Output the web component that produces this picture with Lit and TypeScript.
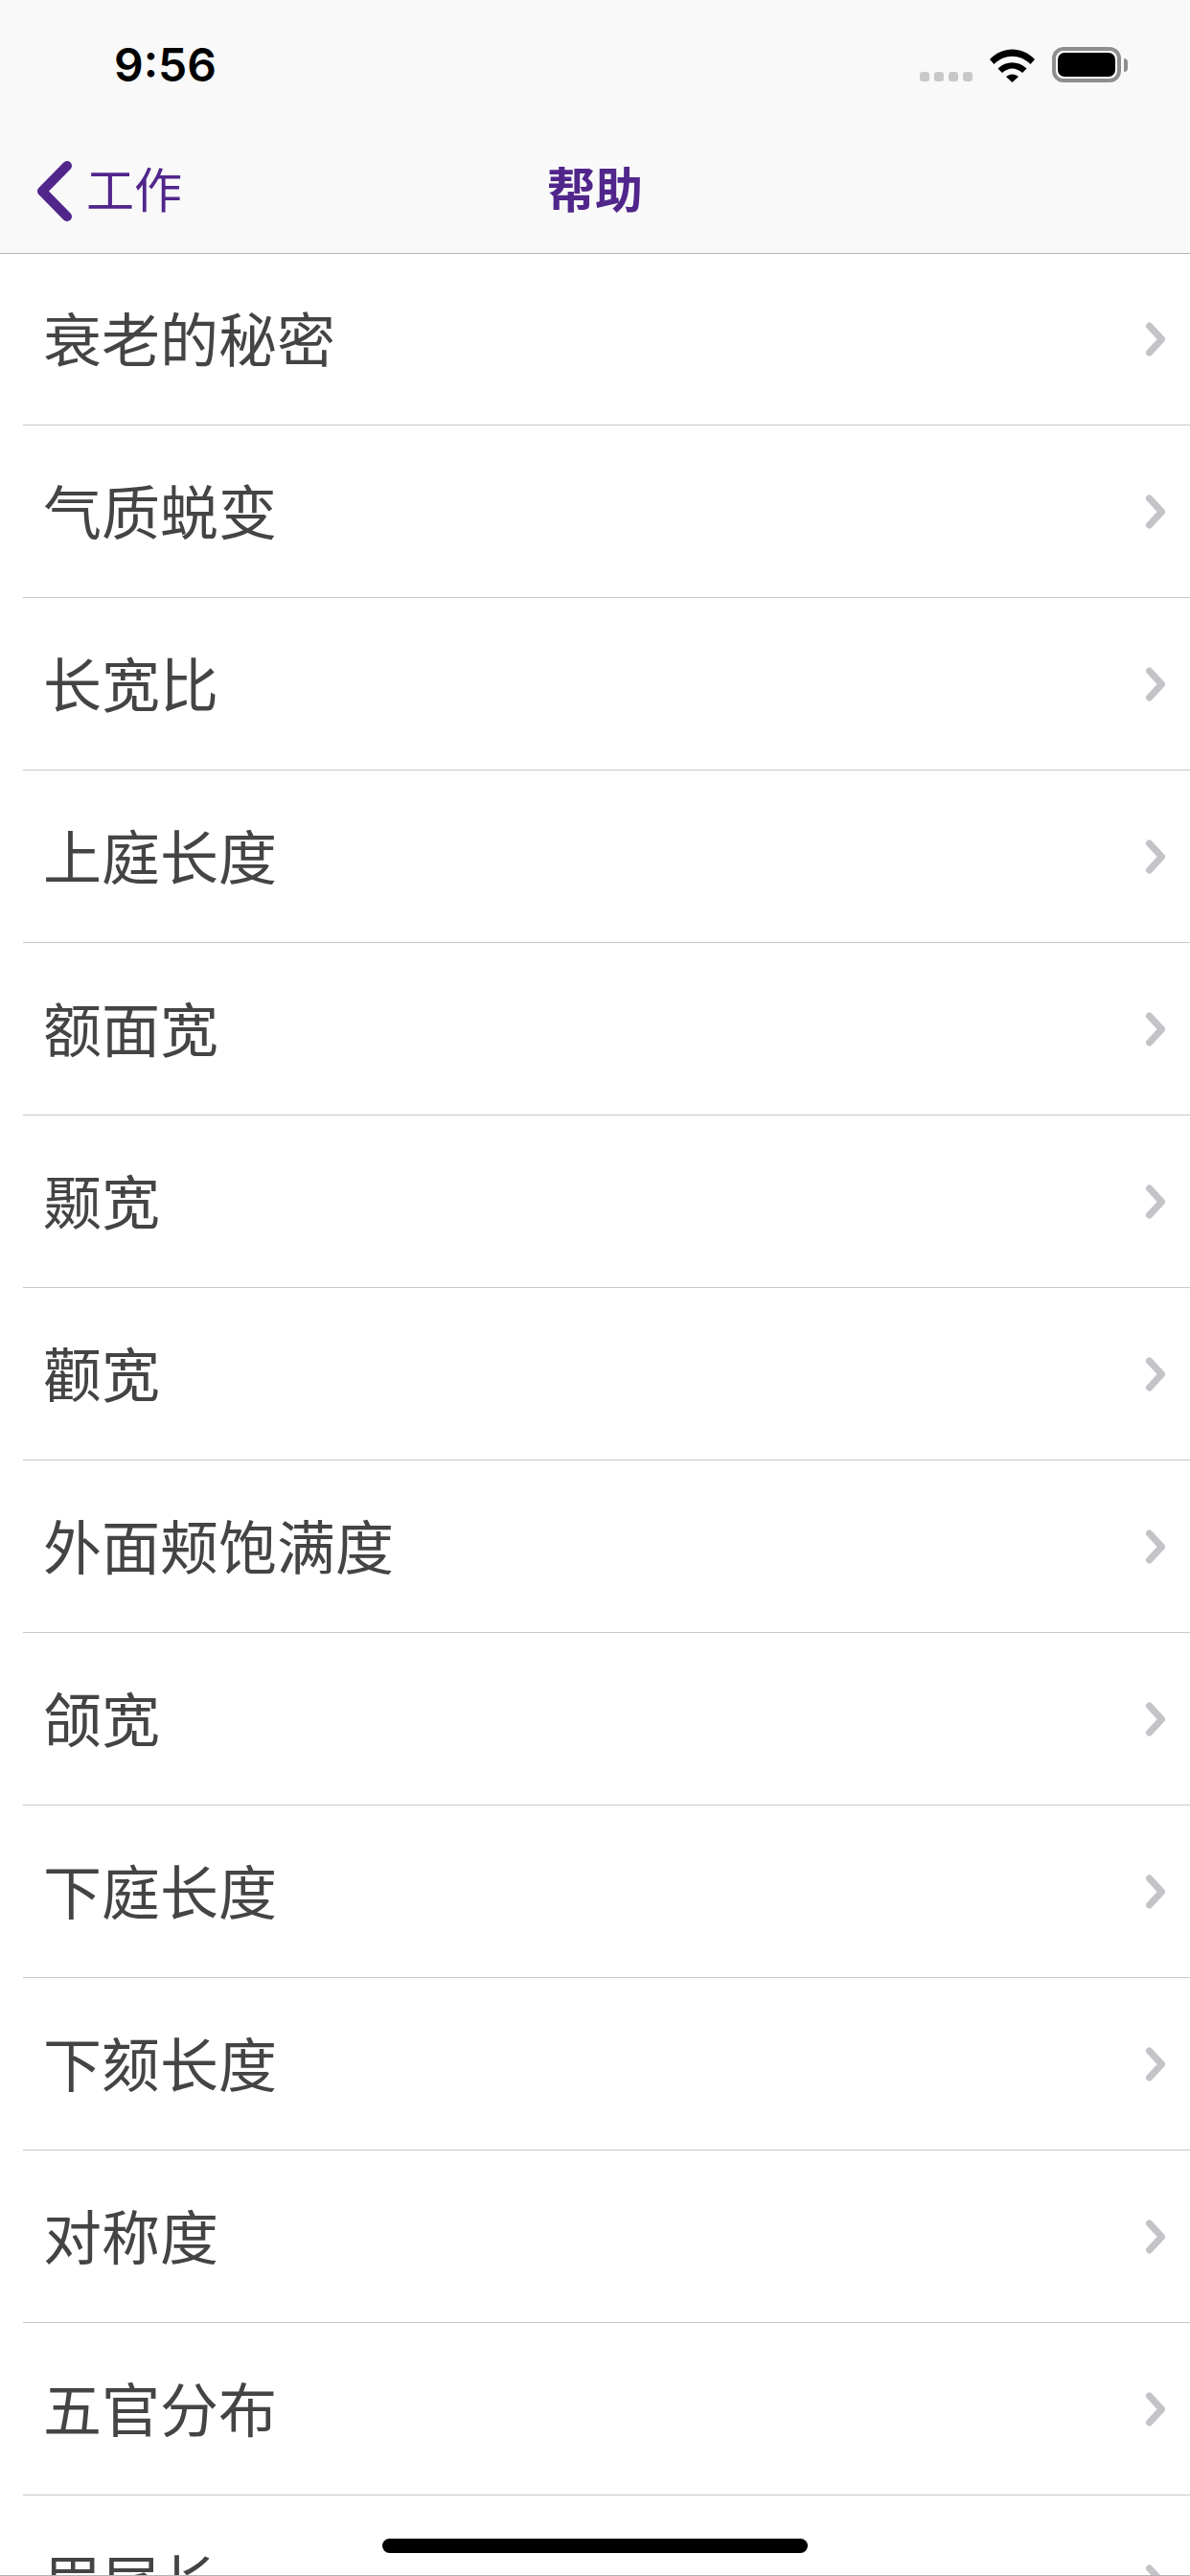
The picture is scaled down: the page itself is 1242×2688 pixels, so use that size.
import { LitElement, css, html, svg } from "lit";
import { customElement } from "lit/decorators.js";

const ITEMS = [
  "衰老的秘密",
  "气质蜕变",
  "长宽比",
  "上庭长度",
  "额面宽",
  "颞宽",
  "颧宽",
  "外面颊饱满度",
  "颌宽",
  "下庭长度",
  "下颏长度",
  "对称度",
  "五官分布",
  "眉尾长",
];

const wifiIcon = svg`
  <path d="M1 13 C14 -1 35 -1 48 13 L43.5 18 C32.5 7 16.5 7 5.500 18 Z" />
  <path d="M9.500 22.500 C18 14 31 14 39.500 22.500 L35 27 C28 21 21 21 14 27 Z" />
  <path d="M18 31 C22 27.500 27 27.500 31 31 L24.500 37 Z" />
`;

@customElement("app-root")
export class AppRoot extends LitElement {
  static styles = css`
    :host {
      display: block;
      position: relative;
      width: 1242px;
      height: 2688px;
      overflow: hidden;
      background: #fff;
      font-family: "Noto Sans CJK SC", "Liberation Sans", sans-serif;
    }

    .header {
      box-sizing: border-box;
      height: 265px;
      background: #f9f9f9;
      border-bottom: 1px solid #b2b2b2;
      display: flex;
      flex-direction: column;
    }

    .status {
      height: 126px;
      flex: none;
      display: flex;
      align-items: flex-start;
      padding: 0 65px 0 119px;
    }

    .time {
      font-family: Inter, "Liberation Sans", sans-serif;
      font-weight: 600;
      font-size: 48px;
      line-height: 36px;
      margin-top: 50px;
      color: #000;
      flex: 1;
    }

    .dots {
      display: flex;
      gap: 5px;
      margin-top: 75px;
    }

    .dots i {
      width: 10px;
      height: 10px;
      border-radius: 3px;
      background: #c8c8c8;
    }

    .wifi {
      width: 49px;
      height: 37px;
      margin: 49px 0 0 17px;
      fill: #000;
    }

    .battery {
      display: flex;
      align-items: center;
      margin: 49px 0 0 17px;
    }

    .battery-body {
      box-sizing: border-box;
      width: 72px;
      height: 37px;
      border: 4px solid #8e8e8e;
      border-radius: 12px;
      padding: 2px;
      background: #fff;
    }

    .battery-body b {
      display: block;
      height: 100%;
      border-radius: 7px;
      background: #000;
    }

    .battery-tip {
      width: 4px;
      height: 14px;
      margin-left: 3px;
      border-radius: 0 7px 7px 0;
      background: #8e8e8e;
    }

    .nav {
      flex: 1;
      display: grid;
      grid-template-columns: 1fr auto 1fr;
      align-items: center;
      color: #51268b;
      font-size: 50px;
      line-height: 60px;
    }

    .back {
      display: flex;
      align-items: center;
      gap: 15px;
      padding-left: 39px;
    }

    .back svg {
      width: 36px;
      height: 63px;
      margin-top: 8px;
      fill: none;
      stroke: currentColor;
      stroke-width: 10;
      stroke-linecap: round;
      stroke-linejoin: round;
    }

    .title {
      font-weight: 600;
      font-size: 50px;
    }

    .list {
      margin-top: -1px;
    }

    .row {
      height: 180px;
      box-sizing: border-box;
      margin-left: 24px;
      padding: 0 26px 0 21px;
      border-bottom: 1px solid #c8c8c8;
      display: flex;
      align-items: center;
      justify-content: space-between;
      color: #444;
      font-size: 61px;
    }

    .row span {
      margin-bottom: 5px;
    }

    .row svg {
      width: 20px;
      height: 36px;
      fill: none;
      stroke: #c4c4c8;
      stroke-width: 7;
      stroke-linecap: round;
      stroke-linejoin: round;
    }

    .home {
      position: absolute;
      left: 399px;
      top: 2649px;
      width: 444px;
      height: 15px;
      border-radius: 8px;
      background: #000;
    }

    .edge {
      position: absolute;
      left: 0;
      right: 0;
      bottom: 0;
      height: 1px;
      background: #b2b2b2;
    }
  `;

  render() {
    return html`
      <div class="header">
        <div class="status">
          <div class="time">9:56</div>
          <div class="dots"><i></i><i></i><i></i><i></i></div>
          <svg class="wifi" viewBox="0 0 49 37">${wifiIcon}</svg>
          <div class="battery">
            <div class="battery-body"><b></b></div>
            <div class="battery-tip"></div>
          </div>
        </div>
        <div class="nav">
          <div class="back">
            <svg viewBox="0 0 36 63"><path d="M31 5 L5 31.500 L31 58" /></svg>
            <span>工作</span>
          </div>
          <div class="title">帮助</div>
          <div></div>
        </div>
      </div>
      <div class="list">
        ${ITEMS.map(
          (item) => html`
            <div class="row">
              <span>${item}</span>
              <svg viewBox="0 0 20 36"><path d="M3.500 4 L16.500 18 L3.500 32" /></svg>
            </div>
          `
        )}
      </div>
      <div class="home"></div>
      <div class="edge"></div>
    `;
  }
}
